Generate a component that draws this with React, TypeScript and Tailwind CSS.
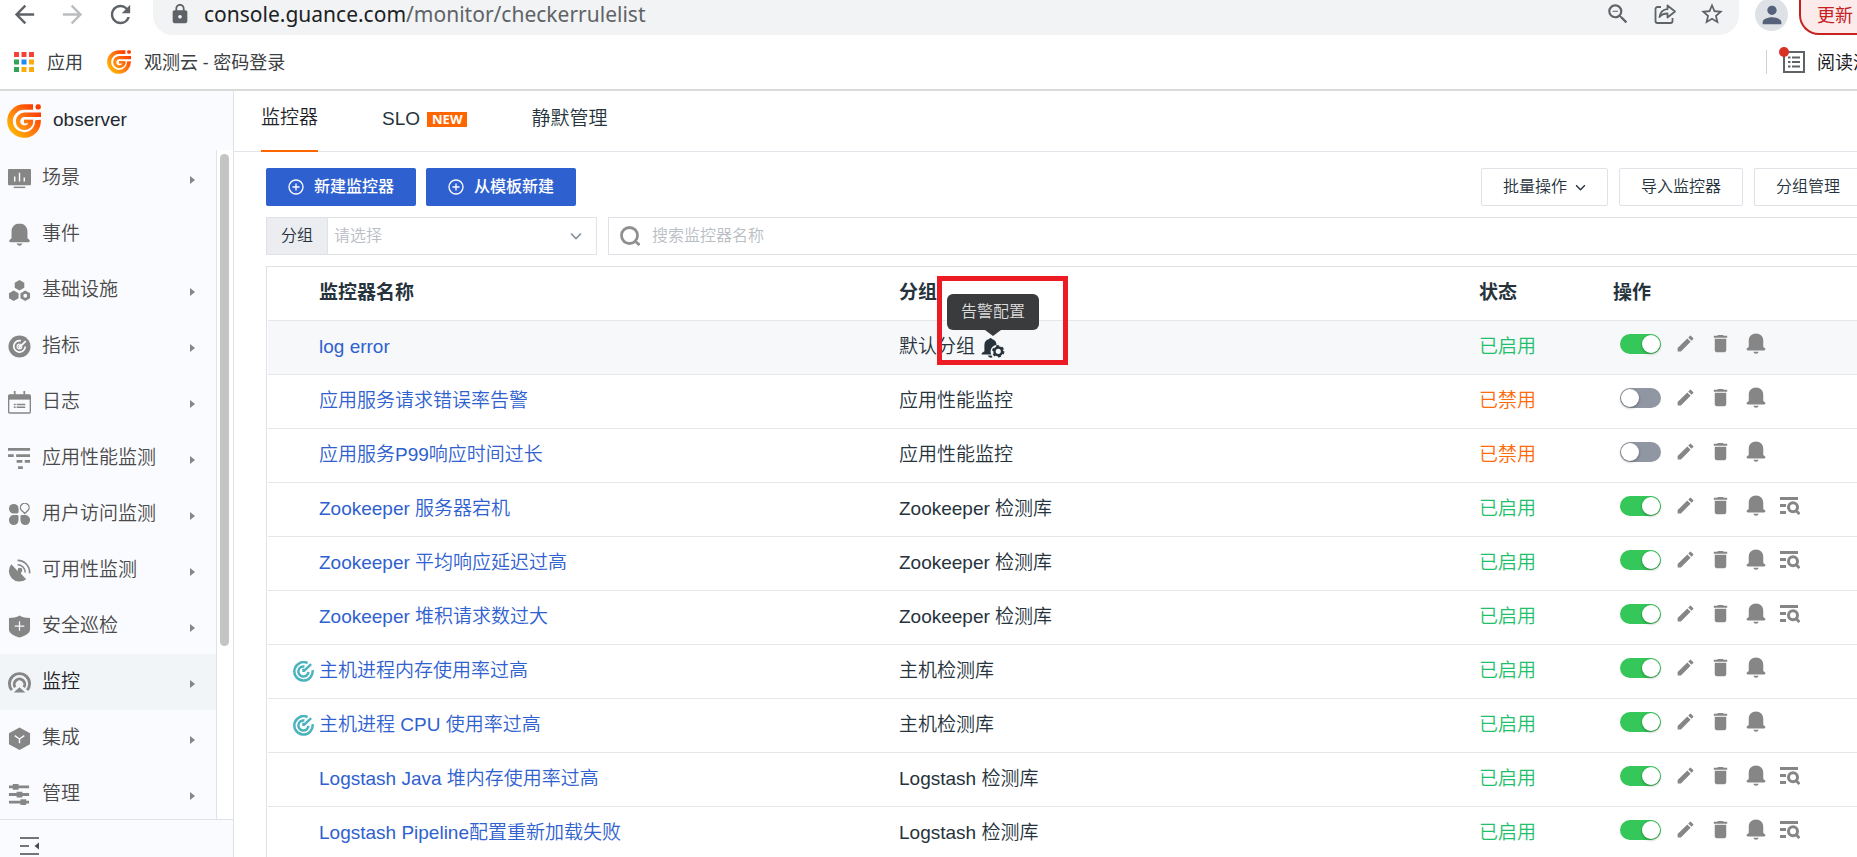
import React from "react";
import { clsx } from "clsx";
import { MdLock, MdZoomOut, MdPerson, MdStarOutline, MdArrowBack, MdArrowForward, MdRefresh, MdEdit, MdDelete } from "react-icons/md";

type IconProps = { className?: string };

function Logo({ className, id }: IconProps & { id: string }) {
  return (
    <svg viewBox="0 0 34 34" className={className} fill="none" aria-hidden="true">
      <defs>
        <linearGradient id={id} x1="4" y1="28" x2="30" y2="6" gradientUnits="userSpaceOnUse">
          <stop offset="0" stopColor="#ffb400" />
          <stop offset="0.5" stopColor="#ff7a10" />
          <stop offset="1" stopColor="#ff3c00" />
        </linearGradient>
      </defs>
      <path d="M26 3H17A14 14 0 1 0 31 16" stroke={`url(#${id})`} strokeWidth="5.600" />
      <path d="M34 10.800H17.500a6.500 6.500 0 1 0 6.500 6.500" stroke={`url(#${id})`} strokeWidth="4.400" />
      <path d="M17 17.500h9" stroke={`url(#${id})`} strokeWidth="3.600" />
      <rect x="28.600" y="0.200" width="5.200" height="5.200" rx="2" fill="#ff3c00" />
    </svg>
  );
}

function BellIcon({ className }: IconProps) {
  return (
    <svg viewBox="0 0 22 24" className={className} fill="currentColor" aria-hidden="true">
      <path d="M11 .5c-4.800 0-8.300 3.500-8.300 8.300V16L.5 17.800C-.1 18.800.5 20 1.800 20h18.400c1.300 0 1.900-1.200 1.300-2.200L19.300 16V8.800c0-4.800-3.500-8.300-8.300-8.300z" />
      <path d="M8 21.500h6c-.4 1.300-1.500 2.300-3 2.300s-2.600-1-3-2.300z" />
    </svg>
  );
}

function SceneIcon({ className }: IconProps) {
  return (
    <svg viewBox="0 0 24 24" className={className} fill="currentColor" aria-hidden="true">
      <rect x="0" y="2" width="24" height="17" rx="1" />
      <rect x="6" y="20.500" width="12" height="1.500" />
      <path d="M7 15v-5M12 15V6M17 15v-4" stroke="#fafbfe" strokeWidth="1.500" />
    </svg>
  );
}

function InfraIcon({ className }: IconProps) {
  return (
    <svg viewBox="0 0 24 24" className={className} fill="currentColor" aria-hidden="true">
      <path d="M12 1l5 2.800v5.400L12 12 7 9.200V3.800zM6 12l5 2.800v5.400L6 23l-5-2.800v-5.400z" />
      <path fillRule="evenodd" d="M18 12l5 2.800v5.400L18 23l-5-2.800v-5.400zm0 3.500a2 2 0 1 0 0 4 2 2 0 0 0 0-4z" />
    </svg>
  );
}

function MetricIcon({ className }: IconProps) {
  return (
    <svg viewBox="0 0 24 24" className={className} fill="none" aria-hidden="true">
      <circle cx="12" cy="12" r="11.500" fill="currentColor" />
      <path d="M13.500 6A6 6 0 1 0 18 12M14 9.500l-3 3M18.500 6.500L11.500 13.500" stroke="#fafbfe" strokeWidth="1.800" />
      <path d="M12 9.500a2.500 2.500 0 1 0 2.500 2.500" stroke="#fafbfe" strokeWidth="1.200" />
    </svg>
  );
}

function LogIcon({ className }: IconProps) {
  return (
    <svg viewBox="0 0 24 24" className={className} fill="none" stroke="currentColor" aria-hidden="true">
      <rect x="0.700" y="4" width="22.600" height="19" rx="1" strokeWidth="1.400" />
      <path d="M1 6.500h22" strokeWidth="5" />
      <path d="M7 0v4M17 0v4" strokeWidth="1.800" />
      <path d="M6 14h2M9 14h9M6 17h2M9 17h9" strokeWidth="1.500" />
    </svg>
  );
}

function ApmIcon({ className }: IconProps) {
  return (
    <svg viewBox="0 0 24 24" className={className} fill="none" stroke="currentColor" strokeWidth="3" aria-hidden="true">
      <path d="M0 2.500h23M0 9h6M8.500 9H23M9 15h6M17.500 15H23M10.500 21.500h5" />
    </svg>
  );
}

function RumIcon({ className }: IconProps) {
  return (
    <svg viewBox="0 0 24 24" className={className} fill="currentColor" aria-hidden="true">
      <path d="M6 1a5 5 0 0 1 5 5v3.500A1.500 1.500 0 0 1 9.500 11H6A5 5 0 0 1 6 1z" />
      <path d="M6 12.500h3.500A1.500 1.500 0 0 1 11 14v4a5 5 0 1 1-10 0v-.5a5 5 0 0 1 5-5z" />
      <path d="M14 12.500h4a5 5 0 0 1 5 5v.5a5 5 0 0 1-10 0v-4a1.500 1.500 0 0 1 1-1.500z" />
      <path d="M17.500 11l-3.200-3.100a4.500 4.500 0 1 1 6.400 0z" fill="none" stroke="currentColor" strokeWidth="1.400" />
    </svg>
  );
}

function DishIcon({ className }: IconProps) {
  return (
    <svg viewBox="0 0 24 24" className={className} fill="none" aria-hidden="true">
      <path d="M3.500 5.500a11 11 0 0 0 15.500 15.500l-5.500-5.500 1-4-4.500 1z" fill="currentColor" />
      <path d="M10 1.500A12.500 12.500 0 0 1 22.500 15M10 6a8 8 0 0 1 8 8" stroke="currentColor" strokeWidth="1.700" />
      <circle cx="12.500" cy="11.500" r="2.500" fill="currentColor" />
    </svg>
  );
}

function ShieldIcon({ className }: IconProps) {
  return (
    <svg viewBox="0 0 24 24" className={className} fill="none" aria-hidden="true">
      <path d="M12 .5c3 2 7 2.500 11 2.500v12c0 4-6 7-11 8.500C7 22 1 19 1 15V3c4 0 8-.5 11-2.500z" fill="currentColor" />
      <path d="M12 6.500v10M7 11.500h10" stroke="#fafbfe" strokeWidth="1.300" />
    </svg>
  );
}

function MonitorIcon({ className }: IconProps) {
  return (
    <svg viewBox="0 0 24 24" className={className} fill="none" aria-hidden="true">
      <path d="M4 20a10.500 10.500 0 1 1 16 0" stroke="currentColor" strokeWidth="3" />
      <path d="M7.500 17a5.500 5.500 0 1 1 9 0" stroke="currentColor" strokeWidth="3" />
      <path d="M12 17l6 5.500H6z" fill="currentColor" />
    </svg>
  );
}

function CubeIcon({ className }: IconProps) {
  return (
    <svg viewBox="0 0 24 24" className={className} fill="none" aria-hidden="true">
      <path d="M12 .5l11 6v11.500l-11 6-11-6V6.500z" fill="currentColor" />
      <path d="M7 9l5 3.500L17 9M12 12.500V17" stroke="#fafbfe" strokeWidth="1.500" />
    </svg>
  );
}

function ManageIcon({ className }: IconProps) {
  return (
    <svg viewBox="0 0 24 24" className={className} fill="none" stroke="currentColor" aria-hidden="true">
      <path d="M1 4h21M1 12h21M1 20h21" strokeWidth="3" />
      <path d="M5 4h6M9 12h6M13 20h6" strokeWidth="6" />
    </svg>
  );
}

function TargetIcon({ className }: IconProps) {
  return (
    <svg viewBox="0 0 22 22" className={className} fill="none" stroke="currentColor" strokeWidth="2.600" aria-hidden="true">
      <path d="M15.200 2.200A9.600 9.600 0 1 0 20.500 9.500" />
      <path d="M12 5.800A5.300 5.300 0 1 0 16.200 11.500" />
      <path d="M11 10.800l8-7.500M11 8v3.500" />
    </svg>
  );
}

function QueryIcon({ className }: IconProps) {
  return (
    <svg viewBox="0 0 20 18" className={className} fill="none" stroke="currentColor" strokeWidth="3" aria-hidden="true">
      <path d="M0 1.500h18M0 8.500h6M0 15.500h6" />
      <circle cx="13" cy="10.200" r="4.500" />
      <path d="M15.500 13l4 4" />
    </svg>
  );
}

function BellGearIcon({ className }: IconProps) {
  return (
    <svg viewBox="0 0 24 22" className={className} aria-hidden="true">
      <path d="M9.500 1c.7 0 1 .5 1.200 1 3 .6 5 3 5 6v.3a7 7 0 0 0-5.500 10H.5c-.7 0-.6-1-.1-1.500L3 15V8c0-3 2-5.400 5-6 .3-.6.800-1 1.500-1zM6.500 19.500h4l1 1.800c-2 .8-4 .2-5-1.800z" fill="currentColor" />
      <circle cx="17.500" cy="15" r="4" stroke="currentColor" strokeWidth="2.600" fill="none" />
      <circle cx="17.500" cy="15" r="5.500" stroke="currentColor" strokeWidth="2" strokeDasharray="2.900 2.860" fill="none" />
    </svg>
  );
}

function PlusCircle() {
  return (
    <svg viewBox="0 0 16 16" className="size-4" fill="none" stroke="currentColor" strokeWidth="1.300" aria-hidden="true">
      <circle cx="8" cy="8" r="7" />
      <path d="M8 4.500v7M4.500 8h7" />
    </svg>
  );
}

function ChevronDown({ className }: IconProps) {
  return (
    <svg viewBox="0 0 12 8" className={className} fill="none" stroke="currentColor" strokeWidth="1.600" aria-hidden="true">
      <path d="M1 1.500l5 5 5-5" />
    </svg>
  );
}

function BrowserBar() {
  return (
    <header className="shrink-0 border-b-2 border-[#dadada] bg-white font-['Noto_Sans','Noto_Sans_CJK_SC',sans-serif] text-[#3c4043]">
      <div className="flex h-[35px] items-start">
        <div className="flex h-7 w-[153px] shrink-0 items-center gap-[19px] pl-[10px] text-[#5f6368]">
          <button aria-label="后退"><MdArrowBack className="size-[29px]" /></button>
          <button aria-label="前进" className="text-[#bbbdbf]"><MdArrowForward className="size-[29px]" /></button>
          <button aria-label="刷新"><MdRefresh className="size-[29px]" /></button>
        </div>
        <div className="flex h-[35px] min-w-0 flex-1 items-start rounded-b-[20px] bg-[#f1f3f4] pr-[14px] pl-4 text-[#5f6368]">
          <div className="flex h-7 flex-1 items-center gap-[13px]">
            <MdLock className="size-[22px]" />
            <span className="text-[21px] leading-7 text-[#5f6368]">
              <span className="text-[#202124]">console.guance.com</span>/monitor/checkerrulelist
            </span>
          </div>
          <div className="flex h-7 items-center gap-[22px]">
            <button aria-label="缩放"><MdZoomOut className="size-[26px]" /></button>
            <button aria-label="分享">
              <svg viewBox="0 0 24 24" className="size-6" fill="none" stroke="currentColor" strokeWidth="1.800" aria-hidden="true">
                <path d="M8 5H4.500A2 2 0 0 0 2.500 7v12a2 2 0 0 0 2 2h13a2 2 0 0 0 2-2v-3" />
                <path d="M6.500 15c.8-5 3.500-7.500 8-7.800V3.500l7.500 6-7.500 6v-4c-3.500 0-6 .8-8 3.500z" strokeLinejoin="round" />
              </svg>
            </button>
            <button aria-label="收藏"><MdStarOutline className="size-[26px]" /></button>
          </div>
        </div>
        <div className="flex w-[118px] shrink-0 items-start justify-between pl-4">
          <span className="-mt-[2px] flex size-[33px] items-center justify-center rounded-full bg-[#dee1e6] text-[#56617a]">
            <MdPerson className="size-7" />
          </span>
          <button className="h-[35px] w-[58px] rounded-bl-[20px] border-b-2 border-l-2 border-[#c5221f] bg-[#fcebea] pb-1 pl-4 text-left text-lg leading-6 whitespace-nowrap text-[#c5221f]">
            更新
          </button>
        </div>
      </div>
      <nav className="flex h-[54px] items-center justify-between pl-[14px] text-lg">
        <div className="flex items-center gap-6">
          <a href="#apps" className="flex items-center gap-[13px]">
            <svg viewBox="0 0 20 20" className="size-5" aria-hidden="true">
              <path d="M0 0h5v5H0zM7.500 0h5v5h-5zM15 0h5v5h-5z" fill="#f44336" />
              <path d="M0 7.500h5v5H0zM0 15h5v5H0z" fill="#34a35a" />
              <path d="M7.500 7.500h5v5h-5z" fill="#1e88f5" />
              <path d="M15 7.500h5v5h-5zM7.500 15h5v5h-5zM15 15h5v5h-5z" fill="#fbab0a" />
            </svg>
            应用
          </a>
          <a href="#login" className="flex items-center gap-[13px]">
            <Logo id="logo-bookmark" className="size-6" />
            观测云 - 密码登录
          </a>
        </div>
        <button className="flex h-6 w-[91px] items-center gap-3 border-l border-[#cfd1d4] pl-4 whitespace-nowrap text-[#202124]">
          <span className="relative shrink-0 text-[#5f6368]">
            <svg viewBox="0 0 22 22" className="size-[22px]" fill="none" stroke="currentColor" strokeWidth="2" aria-hidden="true">
              <rect x="1" y="1" width="20" height="20" />
              <path d="M5 6.500h2.500M9 6.500h8M5 11h2.500M9 11h8M5 15.500h2.500M9 15.500h8" />
            </svg>
            <span className="absolute -top-1 -left-1 size-[10px] rounded-full bg-[#d93025]" />
          </span>
          阅读清单
        </button>
      </nav>
    </header>
  );
}

type NavItem = { label: string; Icon: (p: IconProps) => React.ReactElement; arrow: boolean; active?: boolean };

const navItems: NavItem[] = [
  { label: "场景", Icon: SceneIcon, arrow: true },
  { label: "事件", Icon: BellIcon, arrow: false },
  { label: "基础设施", Icon: InfraIcon, arrow: true },
  { label: "指标", Icon: MetricIcon, arrow: true },
  { label: "日志", Icon: LogIcon, arrow: true },
  { label: "应用性能监测", Icon: ApmIcon, arrow: true },
  { label: "用户访问监测", Icon: RumIcon, arrow: true },
  { label: "可用性监测", Icon: DishIcon, arrow: true },
  { label: "安全巡检", Icon: ShieldIcon, arrow: true },
  { label: "监控", Icon: MonitorIcon, arrow: true, active: true },
  { label: "集成", Icon: CubeIcon, arrow: true },
  { label: "管理", Icon: ManageIcon, arrow: true },
];

function Sidebar() {
  return (
    <aside className="flex w-[234px] shrink-0 flex-col border-r border-[#dfe2e7] bg-[#fafbfe]">
      <div className="flex h-[59px] shrink-0 items-center gap-3 pl-[7px] text-[19px] text-[#24292f]">
        <Logo id="logo-side" className="size-[34px]" />
        observer
      </div>
      <div className="flex min-h-0 flex-1">
        <nav className="flex-1 overflow-hidden">
          {navItems.map(({ label, Icon, arrow, active }) => (
            <a
              key={label}
              href={`#${label}`}
              className={clsx(
                "flex h-14 items-center gap-[11px] pr-[21px] pl-2 text-[19px] font-[350]",
                active ? "bg-[#f1f5f8] text-[#1f2329]" : "text-[#4a4a4a]",
              )}
            >
              <Icon className="size-[23px] text-[#868686]" />
              <span className="flex-1">{label}</span>
              {arrow && (
                <svg viewBox="0 0 5 8" className="mt-1 h-2 w-[5px]" fill="#868686" aria-hidden="true">
                  <path d="M0 0l5 4-5 4z" />
                </svg>
              )}
            </a>
          ))}
        </nav>
        <div className="w-[17px] border-l border-[#e0e4e9] bg-white px-[3px] pt-1">
          <div className="h-[492px] w-[9px] rounded-full bg-[#c4c4c4]" />
        </div>
      </div>
      <div className="h-[38px] shrink-0 border-t border-[#dfe2e7] pt-[17px] pl-5">
        <button aria-label="收起菜单" className="block">
          <svg viewBox="0 0 19 18" className="h-[18px] w-[19px]" fill="none" stroke="#4a4a4a" strokeWidth="1.500" aria-hidden="true">
            <path d="M0 1h19M0 9h9M0 17h19" />
            <path d="M19 5.500v7L14.500 9z" fill="#4a4a4a" stroke="none" />
          </svg>
        </button>
      </div>
    </aside>
  );
}

type Rule = { name: string; group: string; on: boolean; query?: boolean; target?: boolean; hovered?: boolean };

const rules: Rule[] = [
  { name: "log error", group: "默认分组", on: true, hovered: true },
  { name: "应用服务请求错误率告警", group: "应用性能监控", on: false },
  { name: "应用服务P99响应时间过长", group: "应用性能监控", on: false },
  { name: "Zookeeper 服务器宕机", group: "Zookeeper 检测库", on: true, query: true },
  { name: "Zookeeper 平均响应延迟过高", group: "Zookeeper 检测库", on: true, query: true },
  { name: "Zookeeper 堆积请求数过大", group: "Zookeeper 检测库", on: true, query: true },
  { name: "主机进程内存使用率过高", group: "主机检测库", on: true, target: true },
  { name: "主机进程 CPU 使用率过高", group: "主机检测库", on: true, target: true },
  { name: "Logstash Java 堆内存使用率过高", group: "Logstash 检测库", on: true, query: true },
  { name: "Logstash Pipeline配置重新加载失败", group: "Logstash 检测库", on: true, query: true },
];

function Toggle({ on, label }: { on: boolean; label: string }) {
  return (
    <label className={clsx("relative flex h-5 w-[41px] items-center rounded-full p-px", on ? "justify-end bg-[#35c759]" : "bg-[#9097a3]")}>
      <input type="checkbox" role="switch" defaultChecked={on} aria-label={label} className="absolute inset-0 size-full appearance-none" />
      <span className="size-[18px] rounded-full bg-white shadow-[0_1px_3px_rgba(0,0,0,0.35)]" />
    </label>
  );
}

function AlertConfig() {
  return (
    <span className="relative block">
      <button aria-label="告警配置" className="block text-[#26333c]">
        <BellGearIcon className="h-[21px] w-6" />
      </button>
      <span role="tooltip" className="absolute bottom-[28px] left-1/2 flex h-9 w-[92px] -translate-x-1/2 items-center justify-center rounded-md bg-[#3a3b3d] text-base font-[350] text-[#dcdcdc]">
        告警配置
        <span className="absolute top-full left-1/2 -translate-x-1/2 border-x-8 border-t-6 border-x-transparent border-t-[#3a3b3d]" />
      </span>
      <span className="pointer-events-none absolute -top-[61px] -left-11 h-[89px] w-[131px] border-5 border-[#ed1c24]" />
    </span>
  );
}

function RuleTable() {
  return (
    <div className="mt-[11px] border-t border-l border-[#dfe2e7] pl-px">
      <table className="w-full table-fixed border-separate border-spacing-0 text-[19px] text-[#26333c]">
        <thead>
          <tr className="text-left font-bold [&>th]:h-[54px] [&>th]:border-b [&>th]:border-[#e5e7ea]">
            <th className="w-[631px] pl-[51px]">监控器名称</th>
            <th>分组</th>
            <th className="w-[134px]">状态</th>
            <th className="w-[244px]">操作</th>
          </tr>
        </thead>
        <tbody className="font-[350]">
          {rules.map((rule) => (
            <tr key={rule.name} className={clsx("[&>td]:h-[54px] [&>td]:border-b [&>td]:border-[#e5e7ea]", rule.hovered && "bg-[#f6f8fa]")}>
              <td>
                <div className="flex items-center text-[#2f61cf]">
                  <span className="flex w-[51px] justify-end pr-[5px]">
                    {rule.target && <TargetIcon className="size-[21px] text-[#4bb3bd]" />}
                  </span>
                  <a href="#rule">{rule.name}</a>
                </div>
              </td>
              <td>
                <div className="flex items-center gap-[6px]">
                  {rule.group}
                  {rule.hovered && <AlertConfig />}
                </div>
              </td>
              <td className={rule.on ? "text-[#1fbf6b]" : "text-[#ff6a0a]"}>{rule.on ? "已启用" : "已禁用"}</td>
              <td>
                <div className="flex items-center pb-2 pl-[7px] text-[#868686]">
                  <Toggle on={rule.on} label={rule.name} />
                  <button aria-label="编辑" className="ml-[14px]"><MdEdit className="size-[21px]" /></button>
                  <button aria-label="删除" className="ml-[13px]"><MdDelete className="size-[23px]" /></button>
                  <button aria-label="告警" className="ml-[14px]"><BellIcon className="h-[21px] w-5" /></button>
                  {rule.query && (
                    <button aria-label="查看相关" className="ml-[14px]"><QueryIcon className="h-[18px] w-5" /></button>
                  )}
                </div>
              </td>
            </tr>
          ))}
        </tbody>
      </table>
    </div>
  );
}

export default function App() {
  return (
    <div className="flex h-screen flex-col overflow-hidden bg-white font-['Liberation_Sans','Noto_Sans_CJK_SC',sans-serif]">
      <BrowserBar />
      <div className="flex min-h-0 flex-1">
        <Sidebar />
        <main className="min-w-0 flex-1 overflow-hidden">
          <nav className="flex h-[61px] gap-16 border-b border-[#e1e4e8] pl-[27px] text-[19px] font-[350] text-[#26333c]">
            <a href="#monitor" className="-mb-px flex items-center border-b-2 border-[#ff6600] pb-1 text-[#1f2329]">监控器</a>
            <a href="#slo" className="flex items-center gap-[7px] pb-1">
              SLO
              <span className="bg-[#ff6600] px-[5px] font-['Noto_Sans',sans-serif] text-[13px] leading-[15px] font-bold text-white">NEW</span>
            </a>
            <a href="#mute" className="flex items-center pb-1">静默管理</a>
          </nav>
          <div className="pt-4 pl-8">
            <div className="flex justify-between text-base">
              <div className="flex gap-[10px] font-medium text-white">
                <button className="flex h-[38px] items-center gap-[10px] rounded-xs bg-[#2e61cf] px-[22px]"><PlusCircle />新建监控器</button>
                <button className="flex h-[38px] items-center gap-[10px] rounded-xs bg-[#2e61cf] px-[22px]"><PlusCircle />从模板新建</button>
              </div>
              <div className="flex gap-[11px] font-[350] text-[#26333c]">
                <button className="flex h-[38px] items-center gap-2 rounded-xs border border-[#dfe2e7] px-[21px]">批量操作<ChevronDown className="h-[7px] w-[11px]" /></button>
                <button className="h-[38px] rounded-xs border border-[#dfe2e7] px-[21px]">导入监控器</button>
                <button className="h-[38px] w-[103px] rounded-l-xs border border-r-0 border-[#dfe2e7] pl-1">分组管理</button>
              </div>
            </div>
            <div className="mt-[11px] flex h-[38px] gap-[11px] text-base font-[350]">
              <div className="relative flex w-[331px] border border-[#dfe2e7]">
                <label htmlFor="group" className="flex w-[61px] items-center justify-center border-r border-[#dfe2e7] bg-[#ebedf1] text-[#26333c]">分组</label>
                <select id="group" className="flex-1 appearance-none px-[6px] text-[#b9bdc4] outline-none">
                  <option>请选择</option>
                </select>
                <ChevronDown className="pointer-events-none absolute top-[14px] right-[14px] h-2 w-3 text-[#868e9b]" />
              </div>
              <label className="flex flex-1 items-center gap-3 border border-r-0 border-[#dfe2e7] pl-[11px]">
                <svg viewBox="0 0 20 20" className="size-5" fill="none" stroke="#8f8f8f" strokeWidth="2.800" aria-hidden="true">
                  <circle cx="9.500" cy="9.500" r="8" />
                  <path d="M16 16l3.500 3" />
                </svg>
                <input type="text" aria-label="搜索监控器名称" placeholder="搜索监控器名称" className="min-w-0 flex-1 outline-none placeholder:text-[#b9bdc4]" />
              </label>
            </div>
            <RuleTable />
          </div>
        </main>
      </div>
    </div>
  );
}
